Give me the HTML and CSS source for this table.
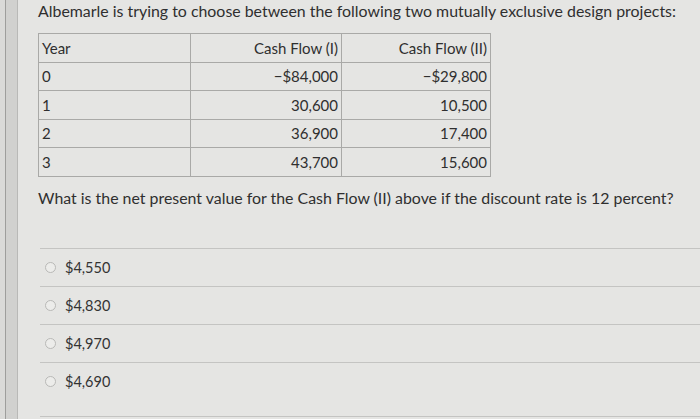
FILE: index.html
```html
<!DOCTYPE html>
<html>
<head>
<meta charset="utf-8">
<link rel="stylesheet" href="styles.css">
</head>
<body>
<div class="page">
  <div class="side"></div>
  <div class="main">
    <p class="title">Albemarle is trying to choose between the following two mutually exclusive design projects:</p>
    <table class="cf">
      <tr><td class="yr">Year</td><td class="num c1">Cash Flow (I)</td><td class="num c2">Cash Flow (II)</td></tr>
      <tr><td class="yr">0</td><td class="num c1">&minus;$84,000</td><td class="num c2">&minus;$29,800</td></tr>
      <tr><td class="yr">1</td><td class="num c1">30,600</td><td class="num c2">10,500</td></tr>
      <tr><td class="yr">2</td><td class="num c1">36,900</td><td class="num c2">17,400</td></tr>
      <tr><td class="yr">3</td><td class="num c1">43,700</td><td class="num c2">15,600</td></tr>
    </table>
    <p class="question">What is the net present value for the Cash Flow (II) above if the discount rate is 12 percent?</p>
    <div class="options">
      <div class="opt"><span class="radio"></span><span class="lbl">$4,550</span></div>
      <div class="opt"><span class="radio"></span><span class="lbl">$4,830</span></div>
      <div class="opt"><span class="radio"></span><span class="lbl">$4,970</span></div>
      <div class="opt"><span class="radio"></span><span class="lbl">$4,690</span></div>
    </div>
  </div>
</div>
</body>
</html>
```

FILE: styles.css
```css
html, body {
  margin: 0;
  padding: 0;
  height: 100%;
}
body {
  background: #e5e5e3;
  font-family: Lato, "Liberation Sans", sans-serif;
  color: #2f2f2f;
  overflow: hidden;
}
.page {
  display: flex;
  height: 419px;
}
.side {
  width: 12px;
  flex: none;
  background: #d1d1cf;
  border-left: 5px solid #dadad8;
  box-shadow: inset 1px 0 0 #9e9e9c;
  border-right: 1px solid #b9b9b7;
}
.main {
  flex: 1;
  padding-left: 20px;
  display: flex;
  flex-direction: column;
}
.title {
  margin: 0;
  padding-top: 1px;
  font-size: 15.9px;
  line-height: 20px;
  white-space: nowrap;
}
.cf {
  margin-top: 12px;
  border-collapse: collapse;
  table-layout: fixed;
  width: 453px;
  font-size: 15px;
}
.cf td {
  border: 1px solid #a9a9a7;
  height: 27.5px;
  padding: 0 3px 0 3px;
  line-height: 18px;
  vertical-align: middle;
}
.cf td.yr {
  width: 145px;
  text-align: left;
}
.cf td.c1 {
  width: 144px;
}
.cf td.num {
  text-align: right;
}
.question {
  margin: 11px 0 0 0;
  font-size: 15.9px;
  line-height: 20px;
  white-space: nowrap;
}
.options {
  margin-top: 40px;
  margin-left: 2px;
  padding-bottom: 16px;
  border-bottom: 1px solid #c4c4c2;
}
.opt {
  border-top: 1px solid #c4c4c2;
  height: 37px;
  display: flex;
  align-items: center;
  gap: 9px;
  padding-left: 5px;
}
.radio {
  width: 9px;
  height: 9px;
  border: 1px solid #b9b9b7;
  border-radius: 50%;
  background: #ececea;
}
.lbl {
  font-size: 14.5px;
  color: #333;
}
```
